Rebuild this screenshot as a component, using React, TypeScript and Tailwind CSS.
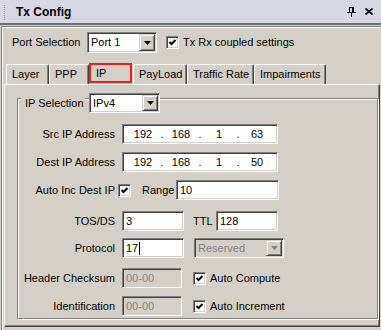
import React from "react";

const sunken =
  "border border-t-[#808080] border-l-[#808080] border-r-white border-b-white shadow-[inset_1px_1px_0_#404040,inset_-1px_-1px_0_#d4d0c8]";
const raised =
  "border border-t-[#d4d0c8] border-l-[#d4d0c8] border-r-[#404040] border-b-[#404040] shadow-[inset_1px_1px_0_#fff,inset_-1px_-1px_0_#808080] bg-[#d4d0c8]";

function Arrow({ disabled }: { disabled?: boolean }) {
  return (
    <svg width="7" height="4" viewBox="0 0 7 4">
      <polygon points="0,0 7,0 3.5,4" fill={disabled ? "#808080" : "#000"} />
    </svg>
  );
}

function Combo({ w, h, text, disabled }: { w: string; h: string; text: string; disabled?: boolean }) {
  return (
    <div className={`${w} ${h} ${sunken} ${disabled ? "bg-[#d4d0c8] text-[#808080]" : "bg-white"} flex items-stretch p-[1px]`}>
      <div className="flex-1 flex items-center pl-[2px]">{text}</div>
      <div className={`w-[16px] ${raised} flex items-center justify-center`}>
        <Arrow disabled={disabled} />
      </div>
    </div>
  );
}

function Check() {
  return (
    <div className={`w-[13px] h-[13px] shrink-0 bg-white ${sunken} flex items-center justify-center`}>
      <svg width="11" height="11" viewBox="0 0 11 11">
        <polyline points="2.5,5 4.5,7 8.5,3" fill="none" stroke="#000" strokeWidth="2" />
      </svg>
    </div>
  );
}

function Field({ w, children, disabled }: { w: string; children?: React.ReactNode; disabled?: boolean }) {
  return (
    <div className={`${w} h-[20px] ${sunken} ${disabled ? "bg-[#d4d0c8] text-[#808080]" : "bg-white"} flex items-center pl-[3px]`}>
      {children}
    </div>
  );
}

function IpField({ octets }: { octets: string[] }) {
  return (
    <div className={`w-[156px] h-[20px] ${sunken} bg-white flex items-center pl-[5px]`}>
      {octets.map((o, i) => (
        <React.Fragment key={i}>
          {i > 0 && <span className="w-[8px] text-center">.</span>}
          <span className="w-[30px] text-center">{o}</span>
        </React.Fragment>
      ))}
    </div>
  );
}

function Label({ children }: { children: React.ReactNode }) {
  return <div className="w-[97px] text-right shrink-0">{children}</div>;
}

const tabBase =
  "h-[20px] flex items-center pl-[5px] border-t border-l border-white border-r border-r-[#404040] shadow-[inset_-1px_0_0_#808080] rounded-t-[2px]";

export default function App() {
  return (
    <div className="w-[381px] h-[330px] overflow-hidden bg-[#d4d0c8] text-black text-[11px] leading-none font-['Liberation_Sans',Arial,sans-serif] flex flex-col">
      {/* Title bar */}
      <div className="h-[23px] shrink-0 bg-[#d8d8e4] flex items-center">
        <svg width="4" height="16" viewBox="0 0 4 16" className="ml-[3px]">
          {[0, 2, 4, 6, 8, 10, 12, 14].map((y) => (
            <React.Fragment key={y}>
              <rect x="0" y={y} width="1" height="1" fill="#fff" />
              <rect x="1" y={y + 1} width="1" height="1" fill="#9a9aa8" />
            </React.Fragment>
          ))}
        </svg>
        <div className="ml-[9px] font-bold text-[12px]">Tx Config</div>
        <div className="flex-1" />
        <svg width="9" height="10" viewBox="0 0 9 10" className="mr-[9px]">
          <rect x="2" y="0" width="1" height="5" fill="#000" />
          <rect x="5" y="0" width="2" height="5" fill="#000" />
          <rect x="2" y="0" width="5" height="1" fill="#000" />
          <rect x="0" y="5" width="9" height="1" fill="#000" />
          <rect x="4" y="6" width="1" height="4" fill="#000" />
        </svg>
        <svg width="8" height="7" viewBox="0 0 8 7" className="mr-[8px]">
          <path d="M0.5 0.5 L7.5 6.5 M7.5 0.5 L0.5 6.5" stroke="#000" strokeWidth="1.6" />
        </svg>
      </div>
      <div className="h-[2px] shrink-0 bg-[#6e6e6e]" />

      {/* Body */}
      <div className="flex-1 flex flex-col mt-[1px] ml-[1px] border-l border-t border-[#808080]">
        <div className="flex-1 flex flex-col border-l border-t border-white pl-[1px]">
          {/* Port row */}
          <div className="flex items-center mt-[4px] h-[21px]">
            <div className="w-[83px] pl-[8px]">Port Selection</div>
            <Combo w="w-[70px]" h="h-[21px]" text="Port 1" />
            <div className="ml-[9px]">
              <Check />
            </div>
            <div className="ml-[4px]">Tx Rx coupled settings</div>
          </div>

          {/* Tabs */}
          <div className="flex mt-[11px] ml-[2px] h-[20px]">
            <div className={`${tabBase} w-[43px]`}>Layer</div>
            <div className={`${tabBase} w-[40px]`}>PPP</div>
            <div className="w-[43px] h-[20px] flex items-center pl-[5px] border-2 border-[#ee1c24] -mt-[1px]">IP</div>
            <div className={`${tabBase} w-[54px] ml-[1px]`}>PayLoad</div>
            <div className={`${tabBase} w-[67px]`}>Traffic Rate</div>
            <div className={`${tabBase} w-[72px]`}>Impairments</div>
          </div>

          {/* Panel */}
          <div className="flex-1 flex flex-col mr-[1px] mb-[3px] border-t border-l border-white border-r border-b border-r-[#404040] border-b-[#404040] shadow-[inset_-1px_-1px_0_#808080] pt-[13px] pl-[12px] pr-[1px] pb-[7px]">
            <div className="relative flex-1 flex flex-col border border-[#808080] shadow-[inset_1px_1px_0_#fff,1px_1px_0_#fff] pt-[25px]">
              {/* Legend */}
              <div className="absolute top-[-6px] left-[3px] flex items-center">
                <div className="w-[64px] h-[12px] flex items-center pl-[4px] bg-[#d4d0c8]">IP Selection</div>
                <div className="ml-[4px]">
                  <Combo w="w-[71px]" h="h-[20px]" text="IPv4" />
                </div>
              </div>

              <div className="flex items-center h-[20px]">
                <Label>Src IP Address</Label>
                <div className="ml-[7px]">
                  <IpField octets={["192", "168", "1", "63"]} />
                </div>
              </div>

              <div className="flex items-center h-[20px] mt-[8px]">
                <Label>Dest IP Address</Label>
                <div className="ml-[7px]">
                  <IpField octets={["192", "168", "1", "50"]} />
                </div>
              </div>

              <div className="flex items-center h-[20px] mt-[8px]">
                <Label>Auto Inc Dest IP</Label>
                <div className="ml-[3px]">
                  <Check />
                </div>
                <div className="ml-[11px] w-[34px]">Range</div>
                <Field w="w-[103px]">10</Field>
              </div>

              <div className="flex items-center h-[20px] mt-[11px]">
                <Label>TOS/DS</Label>
                <div className="ml-[7px]">
                  <Field w="w-[62px]">3</Field>
                </div>
                <div className="ml-[9px] w-[23px]">TTL</div>
                <Field w="w-[62px]">128</Field>
              </div>

              <div className="flex items-center h-[20px] mt-[7px]">
                <Label>Protocol</Label>
                <div className="ml-[7px]">
                  <Field w="w-[62px]">
                    17<span className="w-[1px] h-[13px] bg-black ml-[1px]" />
                  </Field>
                </div>
                <div className="ml-[10px]">
                  <Combo w="w-[90px]" h="h-[20px]" text="Reserved" disabled />
                </div>
              </div>

              <div className="flex items-center h-[20px] mt-[10px]">
                <Label>Header Checksum</Label>
                <div className="ml-[7px]">
                  <Field w="w-[60px]" disabled>00-00</Field>
                </div>
                <div className="ml-[11px]">
                  <Check />
                </div>
                <div className="ml-[4px]">Auto Compute</div>
              </div>

              <div className="flex items-center h-[20px] mt-[8px]">
                <Label>Identification</Label>
                <div className="ml-[7px]">
                  <Field w="w-[60px]" disabled>00-00</Field>
                </div>
                <div className="ml-[11px]">
                  <Check />
                </div>
                <div className="ml-[4px]">Auto Increment</div>
              </div>
            </div>
          </div>
        </div>
      </div>
    </div>
  );
}
